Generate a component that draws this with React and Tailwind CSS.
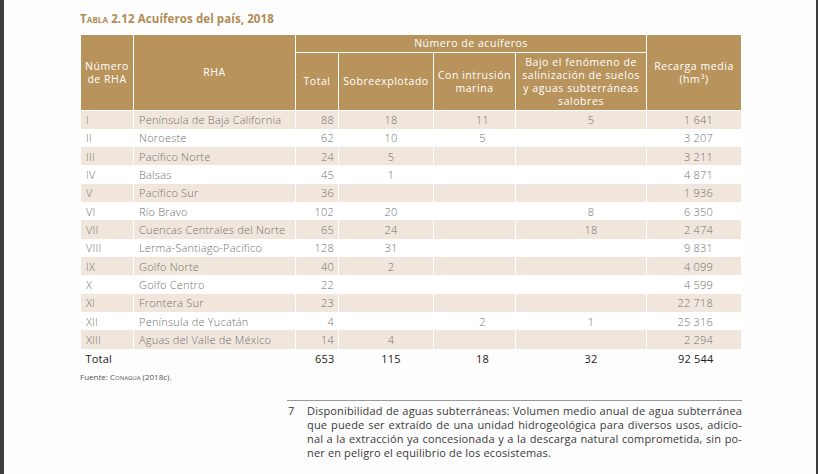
const ROWS = [
  ['I', 'Península de Baja California', '88', '18', '11', '5', '1 641'],
  ['II', 'Noroeste', '62', '10', '5', '', '3 207'],
  ['III', 'Pacífico Norte', '24', '5', '', '', '3 211'],
  ['IV', 'Balsas', '45', '1', '', '', '4 871'],
  ['V', 'Pacífico Sur', '36', '', '', '', '1 936'],
  ['VI', 'Río Bravo', '102', '20', '', '8', '6 350'],
  ['VII', 'Cuencas Centrales del Norte', '65', '24', '', '18', '2 474'],
  ['VIII', 'Lerma-Santiago-Pacífico', '128', '31', '', '', '9 831'],
  ['IX', 'Golfo Norte', '40', '2', '', '', '4 099'],
  ['X', 'Golfo Centro', '22', '', '', '', '4 599'],
  ['XI', 'Frontera Sur', '23', '', '', '', '22 718'],
  ['XII', 'Península de Yucatán', '4', '', '2', '1', '25 316'],
  ['XIII', 'Aguas del Valle de México', '14', '4', '', '', '2 294'],
];

const FOOTNOTE = [
  'Disponibilidad de aguas subterráneas: Volumen medio anual de agua subterránea',
  'que puede ser extraído de una unidad hidrogeológica para diversos usos, adicio-',
  'nal a la extracción ya concesionada y a la descarga natural comprometida, sin po-',
  'ner en peligro el equilibrio de los ecosistemas.',
];

const cell = 'border-x border-white p-0';
const head = 'border border-white p-0 font-normal';

const DataRow = ({ row, striped }) => (
  <tr className={striped ? 'h-[18.33px] bg-[#f0e6db]' : 'h-[18.33px] bg-white'}>
    <td className={`${cell} pl-[5px] text-left`}>{row[0]}</td>
    <td className={`${cell} pl-[5px] text-left`}>{row[1]}</td>
    <td className={`${cell} pr-[4px] text-right`}>{row[2]}</td>
    <td className={`${cell} pl-[10px] text-center`}>{row[3]}</td>
    <td className={`${cell} pl-[16px] text-center`}>{row[4]}</td>
    <td className={`${cell} pl-[20px] text-center`}>{row[5]}</td>
    <td className={`${cell} pr-[28px] text-right`}>{row[6]}</td>
  </tr>
);

export default function App() {
  return (
    <div className="flex h-[474px] w-[818px] bg-[#3d3d3d] pl-[4px] pr-[2px] font-['Open_Sans',sans-serif]">
      <div className="flex h-full w-full flex-col bg-[#fdfdfd] pl-[76px] pr-[74px]">
        <h2 className="mt-[12px] text-[11.5px] font-bold leading-[14px] tracking-[0.1px] text-[#b08c55]">
          <span className="[font-variant:small-caps]">Tabla</span> 2.12 Acuíferos del país, 2018
        </h2>

        <table className="mt-[8px] w-[661px] table-fixed border-collapse text-[11px] leading-[13px]">
          <colgroup>
            <col className="w-[53px]" />
            <col className="w-[162px]" />
            <col className="w-[43px]" />
            <col className="w-[95px]" />
            <col className="w-[82px]" />
            <col className="w-[131px]" />
            <col className="w-[95px]" />
          </colgroup>
          <thead className="bg-[#b8945c] text-[10.5px] tracking-[0.55px] text-white">
            <tr className="h-[18px]">
              <th rowSpan={2} className={head}>
                Número
                <br />
                de RHA
              </th>
              <th rowSpan={2} className={head}>
                RHA
              </th>
              <th colSpan={4} className={head}>
                Número de acuíferos
              </th>
              <th rowSpan={2} className={head}>
                Recarga media
                <br />
                (hm<sup className="text-[7px]">3</sup>)
              </th>
            </tr>
            <tr className="h-[58px]">
              <th className={head}>Total</th>
              <th className={head}>Sobreexplotado</th>
              <th className={head}>
                Con intrusión
                <br />
                marina
              </th>
              <th className={head}>
                Bajo el fenómeno de
                <br />
                salinización de suelos
                <br />
                y aguas subterráneas
                <br />
                salobres
              </th>
            </tr>
          </thead>
          <tbody className="font-light tracking-[0.2px] text-[#727272]">
            {ROWS.map((row, i) => (
              <DataRow key={row[0]} row={row} striped={i % 2 === 0} />
            ))}
            <tr className="h-[19px] font-normal text-[#222]">
              <td className="p-0 pl-[5px] text-left">Total</td>
              <td className="p-0" />
              <td className="p-0 pr-[4px] text-right">653</td>
              <td className="p-0 pl-[10px] text-center">115</td>
              <td className="p-0 pl-[16px] text-center">18</td>
              <td className="p-0 pl-[20px] text-center">32</td>
              <td className="p-0 pr-[28px] text-right">92 544</td>
            </tr>
          </tbody>
        </table>

        <p className="mt-[4px] text-[8px] leading-[10px] text-[#555]">
          Fuente: <span className="[font-variant:small-caps]">Conagua</span> (2018c).
        </p>

        <div className="mt-[18px] ml-[207px] w-[455px] border-t border-[#9a9a9a] pt-[3px]">
          <div className="flex text-[11px] leading-[14px] tracking-[0.15px] text-[#3a3a3a]">
            <span className="w-[20px] shrink-0 pl-[1px]">7</span>
            <div className="min-w-0 flex-1">
              {FOOTNOTE.map((line, i) => (
                <div
                  key={i}
                  className={
                    i < FOOTNOTE.length - 1
                      ? 'whitespace-nowrap text-justify [text-align-last:justify]'
                      : 'whitespace-nowrap text-left'
                  }
                >
                  {line}
                </div>
              ))}
            </div>
          </div>
        </div>
      </div>
    </div>
  );
}
